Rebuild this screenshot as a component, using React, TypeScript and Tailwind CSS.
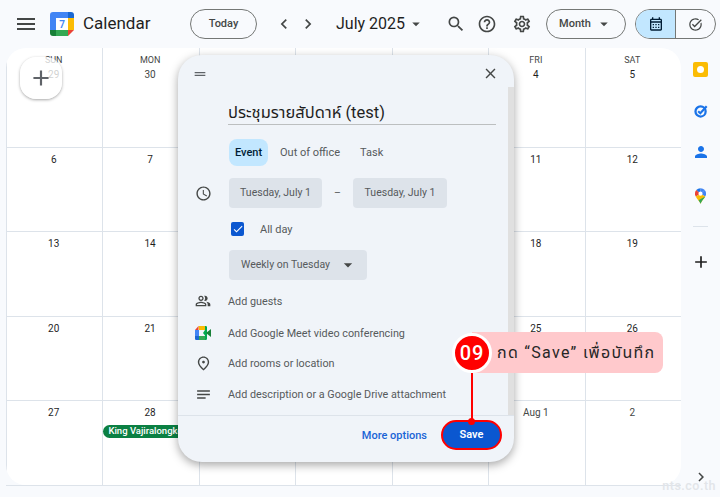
import React from 'react';
import {
  MdMenu, MdSearch, MdHelpOutline, MdOutlineSettings, MdClose, MdOutlineSchedule, MdOutlinePeopleAlt,
  MdOutlinePlace, MdNotes, MdArrowDropDown, MdChevronLeft, MdChevronRight, MdOutlineCalendarMonth,
  MdOutlineTaskAlt, MdAdd, MdDragHandle, MdCheck, MdPerson,
} from 'react-icons/md';

const font = 'font-["Roboto","Noto_Sans","Noto_Sans_Thai",sans-serif]';

const weeks = [
  ['29', '30', '', '', '', '4', '5'],
  ['6', '7', '', '', '', '11', '12'],
  ['13', '14', '', '', '', '18', '19'],
  ['20', '21', '', '', '', '25', '26'],
  ['27', '28', '', '', '', 'Aug 1', '2'],
];
const days = ['SUN', 'MON', 'TUE', 'WED', 'THU', 'FRI', 'SAT'];
const otherMonth = ['29', '30', 'Aug 1', '2'];

const CalendarLogo = () => (
  <svg width="24" height="24" viewBox="0 0 24 24">
    <path d="M3 0h15v6H6v12H0V3a3 3 0 0 1 3-3z" fill="#4285f4" />
    <path d="M18 0h3a3 3 0 0 1 3 3v3h-6z" fill="#1967d2" />
    <rect x="18" y="6" width="6" height="12" fill="#fbbc04" />
    <path d="M0 18h6v6H3a3 3 0 0 1-3-3z" fill="#188038" />
    <rect x="6" y="18" width="12" height="6" fill="#34a853" />
    <path d="M18 18h6l-6 6z" fill="#ea4335" />
    <rect x="6" y="6" width="12" height="12" fill="#fff" />
    <text x="12" y="16" textAnchor="middle" fontSize="10" fontWeight="600" fill="#4285f4" fontFamily="Roboto">7</text>
  </svg>
);

const MeetLogo = () => (
  <svg width="16" height="14" viewBox="0 0 16 14">
    <path d="M3.5 0H10v4H4v-.5z" fill="#fbbc04" />
    <path d="M3.5 0v4H0z" fill="#ea4335" />
    <rect x="0" y="4" width="4" height="6" fill="#4285f4" />
    <path d="M0 10h4v4H1.3A1.3 1.3 0 0 1 0 12.7z" fill="#1967d2" />
    <path d="M4 10h6v4H4z" fill="#34a853" />
    <path d="M10 0h.7A1.3 1.3 0 0 1 12 1.3V12.7a1.3 1.3 0 0 1-1.3 1.3H10V9.5L8 7l2-3z" fill="#00a94f" />
    <path d="M11 7l5-4v8z" fill="#188038" />
  </svg>
);

const MapsPin = () => (
  <svg width="11" height="16" viewBox="0 0 14 20">
    <path d="M7 0a7 7 0 0 1 5.4 2.5L7 7z" fill="#4285f4" />
    <path d="M1.6 2.5A7 7 0 0 1 7 0v7z" fill="#1a73e8" />
    <path d="M1.6 2.5L7 7 1 10.5A7 7 0 0 1 1.6 2.5z" fill="#ea4335" />
    <path d="M12.4 2.5A7 7 0 0 1 13 10.5L7 7z" fill="#4285f4" />
    <path d="M1 10.5L7 7l6 3.5c-1.5 3-4.5 5-6 9.5-1-3.5-4.500-6-6-9.500z" fill="#fbbc04" />
    <path d="M13 10.500c-1.500 3-4.500 5-6 9.500-.5-1.800-1.500-3.300-2.500-4.700z" fill="#34a853" />
    <circle cx="7" cy="7" r="2.600" fill="#fff" />
  </svg>
);

const TasksIcon = () => (
  <svg width="14" height="14" viewBox="0 0 16 16" fill="none">
    <circle cx="7.500" cy="8.500" r="5.800" stroke="#1a73e8" strokeWidth="2.600" />
    <path d="M4.800 8.300l2.400 2.300L14.500 2.500" stroke="#1a73e8" strokeWidth="2.400" />
  </svg>
);

const Row = ({ icon, className, children }: { icon?: React.ReactNode; className: string; children: React.ReactNode }) => (
  <div className={`flex items-center ${className}`}>
    <div className="flex w-[50px] shrink-0 justify-center text-[#444746]">{icon}</div>
    {children}
  </div>
);

export default function App() {
  return (
    <div className={`relative flex h-[497px] w-[720px] flex-col overflow-hidden bg-[#f8fafd] text-[#1f1f1f] ${font}`}>
      {/* top bar */}
      <header className="flex h-12 shrink-0 items-center whitespace-nowrap [&>*]:shrink-0">
        <MdMenu className="ml-[14px] text-[24px] text-[#444746]" />
        <div className="ml-3 h-6"><CalendarLogo /></div>
        <span className="ml-[9px] w-[107px] text-[17px]">Calendar</span>
        <button className="h-[30px] w-[67px] rounded-full border border-[#747775] text-[11px] font-medium text-[#444746]">Today</button>
        <MdChevronLeft className="ml-[17px] text-[20px] text-[#444746]" />
        <MdChevronRight className="ml-1 text-[20px] text-[#444746]" />
        <span className="ml-[18px] w-[70px] text-[16px]">July 2025</span>
        <MdArrowDropDown className="ml-[1px] text-[18px] text-[#444746]" />
        <MdSearch className="ml-[21px] text-[20px] text-[#444746]" />
        <MdHelpOutline className="ml-[11px] text-[20px] text-[#444746]" />
        <MdOutlineSettings className="ml-[15px] text-[20px] text-[#444746]" />
        <button className="ml-[14px] flex h-[30px] w-[80px] items-center justify-center rounded-full border border-[#747775] text-[11px] font-medium text-[#444746]">
          Month <MdArrowDropDown className="ml-1 text-[18px]" />
        </button>
        <div className="ml-[9px] flex h-[30px] w-[81px] overflow-hidden rounded-full border border-[#747775]">
          <div className="flex w-[40px] items-center justify-center border-r border-[#747775] bg-[#c2e7ff] text-[#001d35]">
            <MdOutlineCalendarMonth className="text-[16px]" />
          </div>
          <div className="flex flex-1 items-center justify-center text-[#444746]">
            <MdOutlineTaskAlt className="text-[15px]" />
          </div>
        </div>
      </header>

      <div className="flex flex-1">
        {/* month grid */}
        <div className="ml-[6px] h-[438px] w-[675px] border-b border-[#dde3ea]">
          <div className="grid h-full grid-cols-7 grid-rows-[99px_84px_85px_84px_1fr] overflow-hidden rounded-[20px] bg-white">
            {weeks.map((week, r) =>
              week.map((d, c) => (
                <div key={`${r}-${c}`} className={`flex flex-col items-center border-l border-[#dde3ea] ${r > 0 ? 'border-t' : ''}`}>
                  {r === 0 && <span className="mr-[2px] mt-[7px] text-[9px] leading-[11px] text-[#444746]">{days[c]}</span>}
                  <span className={`mr-[2px] text-[10px] leading-4 ${otherMonth.includes(d) ? 'text-[#444746]' : 'text-[#1f1f1f]'} ${r === 0 ? 'mt-[1px]' : 'mt-[4px]'}`}>{d}</span>
                  {r === 4 && c === 1 && (
                    <div className="mt-[4px] flex h-[13px] w-full items-center overflow-hidden whitespace-nowrap rounded-l-full bg-[#0b8043] pl-[5px] text-[9.5px] font-medium text-white">
                      King Vajiralongkorn's Birthday
                    </div>
                  )}
                </div>
              )),
            )}
          </div>
        </div>

        {/* side panel */}
        <aside className="flex w-[39px] flex-col items-center pt-[14px]">
          <div className="flex h-[15px] w-[15px] items-center justify-center rounded-[2px] bg-[#fbbc04]">
            <div className="h-[7px] w-[7px] rounded-full bg-white" />
          </div>
          <div className="mt-[27px] h-[14px]"><TasksIcon /></div>
          <MdPerson className="mt-[25px] text-[18px] text-[#1a73e8]" />
          <div className="mt-[27px] h-4"><MapsPin /></div>
          <div className="mt-[22px] h-px w-[15px] bg-[#dde3ea]" />
          <MdAdd className="mt-[25px] text-[20px] text-[#1f1f1f]" />
          <MdChevronRight className="mt-[196px] text-[18px] text-[#444746]" />
        </aside>
      </div>

      {/* create button */}
      <div className="absolute left-[20px] top-[57px] flex h-[42px] w-[42px] items-center justify-center rounded-2xl bg-white/75 shadow-[0_1px_3px_rgba(0,0,0,0.35)]">
        <MdAdd className="text-[26px] text-[#5f6368]" />
      </div>

      {/* event dialog */}
      <div className="absolute left-[178px] top-[55px] flex h-[407px] w-[336px] flex-col rounded-[24px] bg-[#f0f4f9] shadow-[0_3px_10px_rgba(0,0,0,0.35)]">
        <div className="absolute bottom-[47px] right-0 top-[32px] w-[6px] bg-[#e0e0e0]" />
        <div className="flex h-[36px] items-center justify-between pl-[14px] pr-[15px]">
          <MdDragHandle className="mt-[1px] text-[16px] text-[#5f6368]" />
          <MdClose className="text-[17px] text-[#444746]" />
        </div>
        <div className="ml-[50px] mt-[10px] h-[24px] w-[268px] border-b border-[#bcbfc0] text-[16.5px] leading-[23px]">ประชุมรายสัปดาห์ (test)</div>
        <div className="ml-[51px] mt-[14px] flex h-[27px] items-center text-[11px] text-[#565a5c]">
          <div className="flex h-[27px] w-[39px] items-center justify-center rounded-lg bg-[#c2e7ff] pt-[2px] font-medium text-[#001d35]">Event</div>
          <span className="ml-[12px] mt-[1px]">Out of office</span>
          <span className="ml-[20px] mt-[1px]">Task</span>
        </div>
        <Row icon={<MdOutlineSchedule className="text-[17px]" />} className="mt-[12px] h-[30px] text-[10.5px] text-[#565a5c]">
          <div className="ml-[1px] flex h-[30px] w-[93px] items-center justify-center rounded bg-[#dde3ea]">Tuesday, July 1</div>
          <span className="mx-[12px] w-[7px] text-center">–</span>
          <div className="flex h-[30px] w-[94px] items-center justify-center rounded bg-[#dde3ea]">Tuesday, July 1</div>
        </Row>
        <Row className="mt-[14px] h-[14px] text-[11px] text-[#565a5c]">
          <div className="ml-[3px] flex h-[14px] w-[13px] items-center justify-center rounded-[2px] bg-[#0b57d0] text-white">
            <MdCheck className="text-[12px]" />
          </div>
          <span className="ml-[16px] mt-[2px]">All day</span>
        </Row>
        <Row className="mt-[14px] h-[30px] text-[10.5px] text-[#565a5c]">
          <div className="ml-[1px] flex h-[30px] w-[138px] items-center rounded bg-[#dde3ea] pl-[12px]">
            Weekly on Tuesday
            <MdArrowDropDown className="ml-[8px] text-[20px] text-[#444746]" />
          </div>
        </Row>
        <Row icon={<MdOutlinePeopleAlt className="text-[16px]" />} className="mt-[11px] h-[20px] text-[10.8px] text-[#565a5c]"><span className="mt-[2px]">Add guests</span></Row>
        <Row icon={<MeetLogo />} className="mt-[12px] h-[20px] text-[10.8px] text-[#565a5c]"><span className="mt-[2px]">Add Google Meet video conferencing</span></Row>
        <Row icon={<MdOutlinePlace className="text-[17px]" />} className="mt-[10px] h-[20px] text-[10.8px] text-[#565a5c]"><span className="mt-[2px]">Add rooms or location</span></Row>
        <Row icon={<MdNotes className="text-[17px]" />} className="mt-[11px] h-[20px] text-[10.8px] text-[#565a5c]"><span className="mt-[2px]">Add description or a Google Drive attachment</span></Row>
        <div className="mt-[11px] flex h-[47px] items-start justify-end border-t border-[#dde3ea] pr-[12px] pt-[4px]">
          <span className="mr-[14px] mt-[8px] text-[11px] font-medium text-[#1a64d6]">More options</span>
          <button className="h-[30px] w-[61px] rounded-full border-2 border-[#ff0000] bg-[#0b57d0] text-[11px] font-semibold text-white">Save</button>
        </div>
      </div>

      {/* step annotation */}
      <div className="absolute left-[472px] top-[332px] flex h-[41px] w-[191px] items-center rounded-r-lg bg-[#ffc9cc] pl-[25px] text-[16px] tracking-[1.3px] text-[#262626]">
        กด “Save” เพื่อบันทึก
      </div>
      <div className="absolute left-[452px] top-[333px] flex h-[40px] w-[40px] items-center justify-center rounded-full border-[3px] border-white bg-[#ff0000] text-[20px] font-medium tracking-[1px] text-white">09</div>
      <div className="absolute left-[471px] top-[373px] h-[48px] w-[2px] bg-[#ff0000]" />
      <div className="absolute left-[468px] top-[418px] h-[7px] w-[7px] rounded-full bg-[#ff0000]" />

      <span className="absolute bottom-[1px] right-[4px] text-[12.5px] font-medium tracking-[0.5px] text-[#e2e5e9]">nts.co.th</span>
    </div>
  );
}
